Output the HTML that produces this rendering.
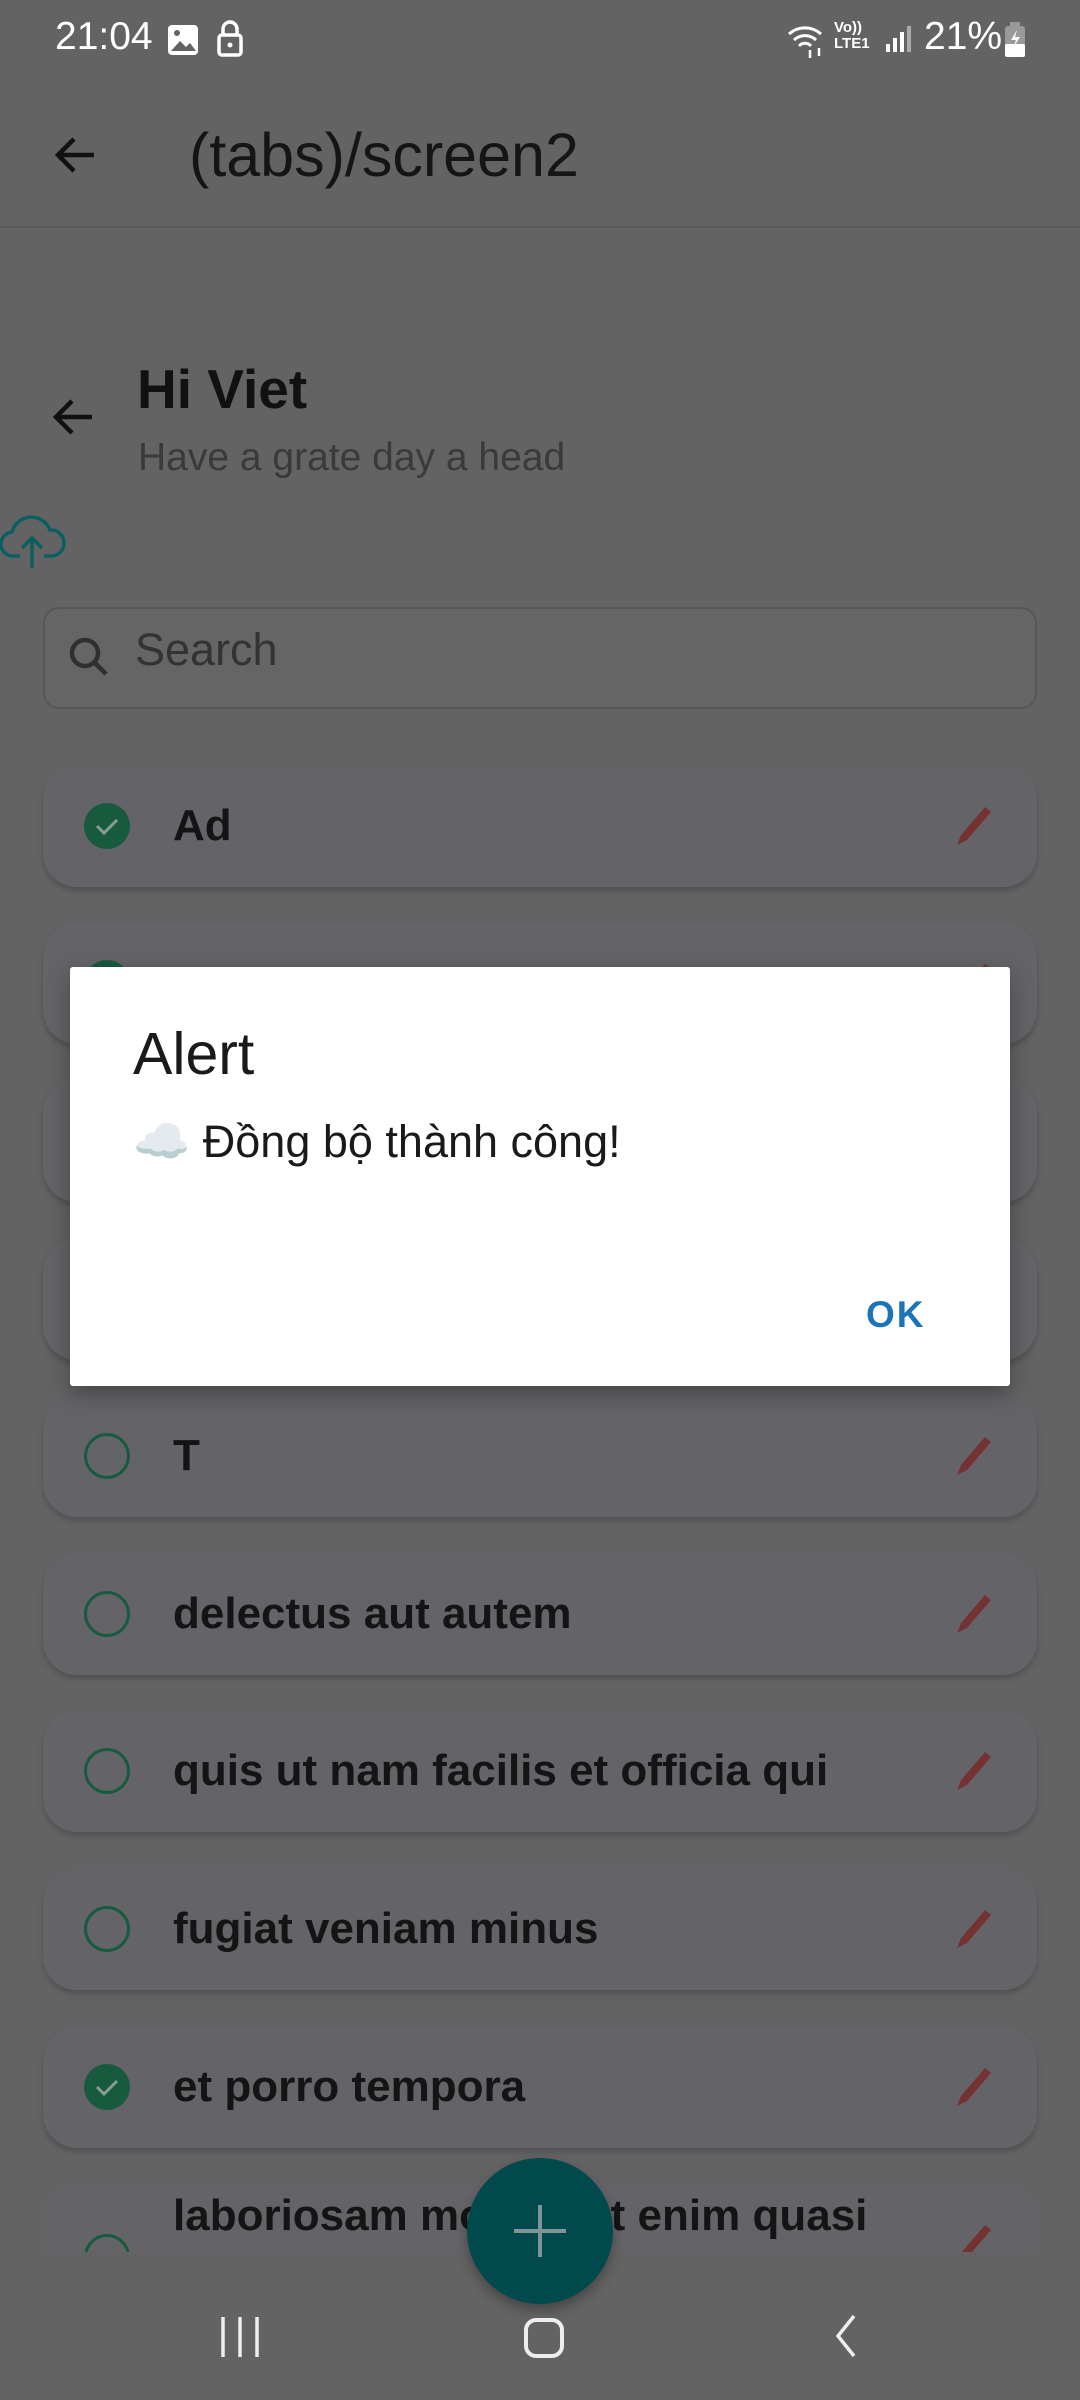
<!DOCTYPE html>
<html><head><meta charset="utf-8"><style>
*{margin:0;padding:0;box-sizing:border-box}
body{width:1080px;height:2400px;background:#636363;font-family:"Liberation Sans",sans-serif;position:relative;overflow:hidden;color:#111}
.abs{position:absolute}
.item{position:absolute;left:43px;width:994px;height:122px;background:#646468;border-radius:34px;box-shadow:0 4px 6px rgba(0,0,0,0.18)}
.item .t{position:absolute;left:130px;top:0;line-height:122px;font-size:44px;font-weight:bold;color:#141414;white-space:nowrap}
.item svg.c{position:absolute;left:40px;top:37px}
.item svg.p{position:absolute;left:908px;top:38px}
</style></head><body>
<!-- status bar -->
<div class="abs" style="left:55px;top:15px;font-size:39px;color:#fff">21:04</div>
<svg class="abs" style="left:166px;top:23px" width="34" height="34" viewBox="0 0 34 34"><rect x="2" y="2" width="30" height="30" rx="4" fill="#fff"/><path d="M5 28l9-10 6 6 4-4 6 8z" fill="#636363"/><circle cx="11" cy="10" r="3" fill="#636363"/></svg>
<svg class="abs" style="left:215px;top:18px" width="30" height="40" viewBox="0 0 30 40"><path d="M8 17v-6a7 7 0 0 1 14 0v6" stroke="#fff" stroke-width="3.5" fill="none"/><rect x="4" y="17" width="22" height="20" rx="3" stroke="#fff" stroke-width="3.5" fill="none"/><circle cx="15" cy="27" r="2.5" fill="#fff"/></svg>
<svg class="abs" style="left:786px;top:22px" width="40" height="36" viewBox="0 0 40 36"><path d="M3 12a24 24 0 0 1 32 0M8 18a16 16 0 0 1 22 0M13 24a8 8 0 0 1 12 0" stroke="#fff" stroke-width="3" fill="none"/><path d="M24 28v8M33 26v8" stroke="#fff" stroke-width="2.5"/></svg>
<div class="abs" style="left:834px;top:20px;font-size:15px;color:#fff;line-height:16px;font-weight:bold">Vo))<br>LTE1</div>
<svg class="abs" style="left:884px;top:24px" width="30" height="30"><rect x="2" y="20" width="4" height="8" fill="#fff"/><rect x="9" y="14" width="4" height="14" fill="#fff"/><rect x="16" y="8" width="4" height="20" fill="#fff"/><rect x="23" y="2" width="4" height="26" fill="#aaa"/></svg>
<div class="abs" style="left:924px;top:15px;font-size:39px;color:#fff">21%</div>
<svg class="abs" style="left:1004px;top:22px" width="22" height="36"><rect x="1" y="4" width="20" height="31" rx="3" fill="#999"/><rect x="6" y="0" width="10" height="5" fill="#999"/><rect x="1" y="22" width="20" height="13" rx="2" fill="#fff"/><path d="M13 8l-6 10h5l-3 8 7-11h-5z" fill="#fff"/></svg>
<!-- header -->
<svg class="abs" style="left:50px;top:130px" width="50" height="50" viewBox="0 0 50 50"><path d="M44 25H8M24 9L8 25l16 16" stroke="#111" stroke-width="4.5" fill="none"/></svg>
<div class="abs" style="left:189px;top:120px;font-size:61px;color:#151515">(tabs)/screen2</div>
<div class="abs" style="left:0;top:226px;width:1080px;height:2px;background:#5a5a5a"></div>
<!-- greeting -->
<svg class="abs" style="left:48px;top:394px" width="50" height="46" viewBox="0 0 50 46"><path d="M44 23H8M24 7L8 23l16 16" stroke="#111" stroke-width="4.5" fill="none"/></svg>
<div class="abs" style="left:137px;top:357px;font-size:55px;font-weight:bold;color:#111">Hi Viet</div>
<div class="abs" style="left:138px;top:436px;font-size:39px;color:#3a3a3a">Have a grate day a head</div>
<svg class="abs" style="left:0;top:512px" width="66" height="58" viewBox="0 0 66 58"><path d="M20 44H14A12 12 0 0 1 12 20 20 20 0 0 1 50 18a13 13 0 0 1 2 26H44" stroke="#0b5f62" stroke-width="3.5" fill="none"/><path d="M32 56V26M22 36l10-10 10 10" stroke="#0b5f62" stroke-width="3.5" fill="none"/></svg>
<!-- search -->
<div class="abs" style="left:43px;top:607px;width:994px;height:102px;border:2px solid #575757;border-radius:16px;background:#656565"></div>
<svg class="abs" style="left:66px;top:634px" width="46" height="46" viewBox="0 0 46 46"><circle cx="19" cy="19" r="13" stroke="#2f2f2f" stroke-width="4.5" fill="none"/><path d="M29 29l11 11" stroke="#2f2f2f" stroke-width="4.5"/></svg>
<div class="abs" style="left:135px;top:624px;font-size:45px;color:#333">Search</div>
<!-- items -->
<div class="item" style="top:765px"><svg class="c" width="48" height="48"><circle cx="24" cy="24" r="23" fill="#175a3e"/><path d="M14 24l7 7 13-13" stroke="#8a9a95" stroke-width="3" fill="none"/></svg><div class="t">Ad</div><svg class="p" width="46" height="46"><path d="M6 42l4-10 24-28 6 5-24 28z" fill="#743232"/></svg></div>
<div class="item" style="top:922px"><svg class="c" width="48" height="48"><circle cx="24" cy="24" r="23" fill="#175a3e"/></svg><svg class="p" width="46" height="46"><path d="M6 42l4-10 24-28 6 5-24 28z" fill="#743232"/></svg></div>
<div class="item" style="top:1080px"></div>
<div class="item" style="top:1238px"></div>
<div class="item" style="top:1395px"><svg class="c" width="48" height="48"><circle cx="24" cy="24" r="21.5" stroke="#175a3e" stroke-width="3" fill="none"/></svg><div class="t">T</div><svg class="p" width="46" height="46"><path d="M6 42l4-10 24-28 6 5-24 28z" fill="#743232"/></svg></div>
<div class="item" style="top:1553px"><svg class="c" width="48" height="48"><circle cx="24" cy="24" r="21.5" stroke="#175a3e" stroke-width="3" fill="none"/></svg><div class="t">delectus aut autem</div><svg class="p" width="46" height="46"><path d="M6 42l4-10 24-28 6 5-24 28z" fill="#743232"/></svg></div>
<div class="item" style="top:1710px"><svg class="c" width="48" height="48"><circle cx="24" cy="24" r="21.5" stroke="#175a3e" stroke-width="3" fill="none"/></svg><div class="t">quis ut nam facilis et officia qui</div><svg class="p" width="46" height="46"><path d="M6 42l4-10 24-28 6 5-24 28z" fill="#743232"/></svg></div>
<div class="item" style="top:1868px"><svg class="c" width="48" height="48"><circle cx="24" cy="24" r="21.5" stroke="#175a3e" stroke-width="3" fill="none"/></svg><div class="t">fugiat veniam minus</div><svg class="p" width="46" height="46"><path d="M6 42l4-10 24-28 6 5-24 28z" fill="#743232"/></svg></div>
<div class="item" style="top:2026px"><svg class="c" width="48" height="48"><circle cx="24" cy="24" r="23" fill="#175a3e"/><path d="M14 24l7 7 13-13" stroke="#8a9a95" stroke-width="3" fill="none"/></svg><div class="t">et porro tempora</div><svg class="p" width="46" height="46"><path d="M6 42l4-10 24-28 6 5-24 28z" fill="#743232"/></svg></div>
<div class="abs" style="left:0;top:2183px;width:1080px;height:69px;overflow:hidden">
<div class="item" style="top:0;box-shadow:none"><svg class="c" style="top:50px" width="48" height="48"><circle cx="24" cy="24" r="21.5" stroke="#175a3e" stroke-width="3" fill="none"/></svg><div class="t" style="line-height:46px;top:10px">laboriosam mollitia et enim quasi</div><svg class="p" style="top:38px" width="46" height="46"><path d="M6 42l4-10 24-28 6 5-24 28z" fill="#743232"/></svg></div>
</div>
<!-- FAB -->
<div class="abs" style="left:467px;top:2158px;width:146px;height:146px;border-radius:50%;background:#00494d;box-shadow:0 6px 12px rgba(0,0,0,0.3)"></div>
<div class="abs" style="left:514px;top:2229px;width:52px;height:4px;background:#7f9595"></div>
<div class="abs" style="left:538px;top:2205px;width:4px;height:52px;background:#7f9595"></div>
<!-- nav -->
<svg class="abs" style="left:215px;top:2315px" width="50" height="44"><path d="M8 2v40M25 2v40M42 2v40" stroke="#eee" stroke-width="3.5"/></svg>
<div class="abs" style="left:524px;top:2318px;width:40px;height:40px;border:4px solid #eee;border-radius:12px"></div>
<svg class="abs" style="left:830px;top:2313px" width="30" height="46"><path d="M24 3L8 23l16 20" stroke="#eee" stroke-width="3.5" fill="none"/></svg>
<!-- dialog -->
<div class="abs" style="left:70px;top:967px;width:940px;height:419px;background:#fff;border-radius:3px;box-shadow:0 8px 24px rgba(0,0,0,0.3)"></div>
<div class="abs" style="left:133px;top:1020px;font-size:59px;color:#1a1a1a">Alert</div>
<div class="abs" style="left:133px;top:1114px;font-size:45px;color:#1a1a1a;white-space:nowrap"><span style="font-size:46px">☁️</span> Đồng bộ thành công!</div>
<div class="abs" style="left:866px;top:1294px;font-size:37px;font-weight:bold;color:#1b74b5;letter-spacing:2px">OK</div>
</body></html>
